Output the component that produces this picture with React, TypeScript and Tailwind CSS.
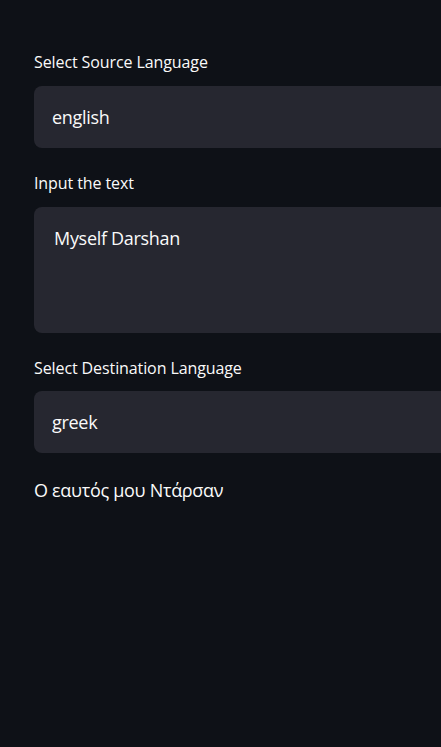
const font = { fontFamily: '"Open Sans", "Noto Sans", sans-serif' };

function Label({ children }: { children: string }) {
  return (
    <div className="h-[24px] text-[16px] leading-[24px] tracking-[-0.1px] text-[#fafafa]">
      {children}
    </div>
  );
}

function SelectBox({ value }: { value: string }) {
  return (
    <div className="flex h-[62px] w-[480px] items-center rounded-[8px] bg-[#262730] pl-[18px] text-[18px] tracking-[-0.3px] text-[#fafafa]">
      {value}
    </div>
  );
}

export default function App() {
  return (
    <div
      className="h-[747px] w-[441px] overflow-hidden bg-[#0e1117] pl-[34px] pt-[50px]"
      style={font}
    >
      <Label>Select Source Language</Label>
      <div className="mt-[12px]">
        <SelectBox value="english" />
      </div>
      <div className="mt-[23px]">
        <Label>Input the text</Label>
      </div>
      <div className="mt-[12px] h-[126px] w-[480px] rounded-[8px] bg-[#262730] pl-[20px] pt-[18px] text-[18px] leading-[26px] tracking-[-0.3px] text-[#fafafa]">
        Myself Darshan
      </div>
      <div className="mt-[23px]">
        <Label>Select Destination Language</Label>
      </div>
      <div className="mt-[11px]">
        <SelectBox value="greek" />
      </div>
      <div className="mt-[24px] text-[18px] leading-[26px] tracking-[-0.3px] text-[#fafafa]">
        Ο εαυτός μου Ντάρσαν
      </div>
    </div>
  );
}
